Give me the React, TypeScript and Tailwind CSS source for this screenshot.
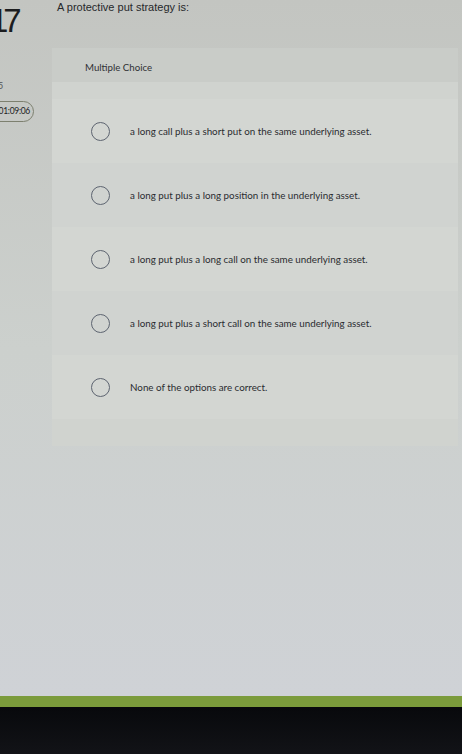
const options = [
  "a long call plus a short put on the same underlying asset.",
  "a long put plus a long position in the underlying asset.",
  "a long put plus a long call on the same underlying asset.",
  "a long put plus a short call on the same underlying asset.",
  "None of the options are correct.",
];

function Radio() {
  return (
    <span className="block h-[19px] w-[19px] shrink-0 rounded-full border-[1.5px] border-[#5d6470]" />
  );
}

export default function App() {
  return (
    <div
      className="flex h-[754px] w-[462px] flex-col overflow-hidden"
      style={{ fontFamily: "Lato, 'Open Sans', sans-serif" }}
    >
      <div className="flex h-[696px] bg-gradient-to-b from-[#c3c5c1] via-[#ccd0cd] to-[#cfd2d6]">
        {/* left column */}
        <div className="w-[52px] shrink-0 overflow-hidden">
          <div
            className="ml-[-10px] mt-[4px] text-[33px] leading-[34px] tracking-[-5px] text-[#1c1d1f]"
            style={{ fontFamily: "'Liberation Sans', Arial, sans-serif" }}
          >
            17
          </div>
          <div className="ml-[-2px] mt-[43px] text-[9px] leading-[10px] text-[#555]">5</div>
          <div className="ml-[-12px] mt-[10px] flex h-[21px] w-[46px] items-center justify-end rounded-full border border-[#7d806f] pr-[3px] text-[8.5px] tracking-[-0.3px] text-[#1c1d1f]">
            01:09:06
          </div>
        </div>

        {/* main column */}
        <div className="flex flex-1 flex-col pr-[4px]">
          <div
            className="pl-[5px] pt-[1px] text-[11px] leading-[13px] text-[#26282b]"
            style={{ fontFamily: "'Liberation Sans', Arial, sans-serif" }}
          >
            A protective put strategy is:
          </div>
          <div className="mt-[34px] flex flex-col bg-[#d0d3cf] pb-[27px]">
            <div className="bg-[#c9ccc8] pl-[33px] pt-[13px] pb-[8px] text-[9.7px] leading-[13px] text-[#2f3134]">
              Multiple Choice
            </div>
            <div className="mt-[17px] flex flex-col">
              {options.map((o, i) => (
                <div
                  key={o}
                  className={`flex h-[64px] items-center gap-[20px] pl-[39px] ${
                    i % 2 === 0 ? "bg-[#d3d6d2]" : "bg-[#d0d3d0]"
                  }`}
                >
                  <Radio />
                  <span className="text-[9.8px] leading-[13px] text-[#2a2c30]">{o}</span>
                </div>
              ))}
            </div>
          </div>
        </div>
      </div>
      <div className="h-[11px] bg-[#7b9b3b]" />
      <div className="flex-1 bg-gradient-to-b from-[#08090c] to-[#121317]" />
    </div>
  );
}
